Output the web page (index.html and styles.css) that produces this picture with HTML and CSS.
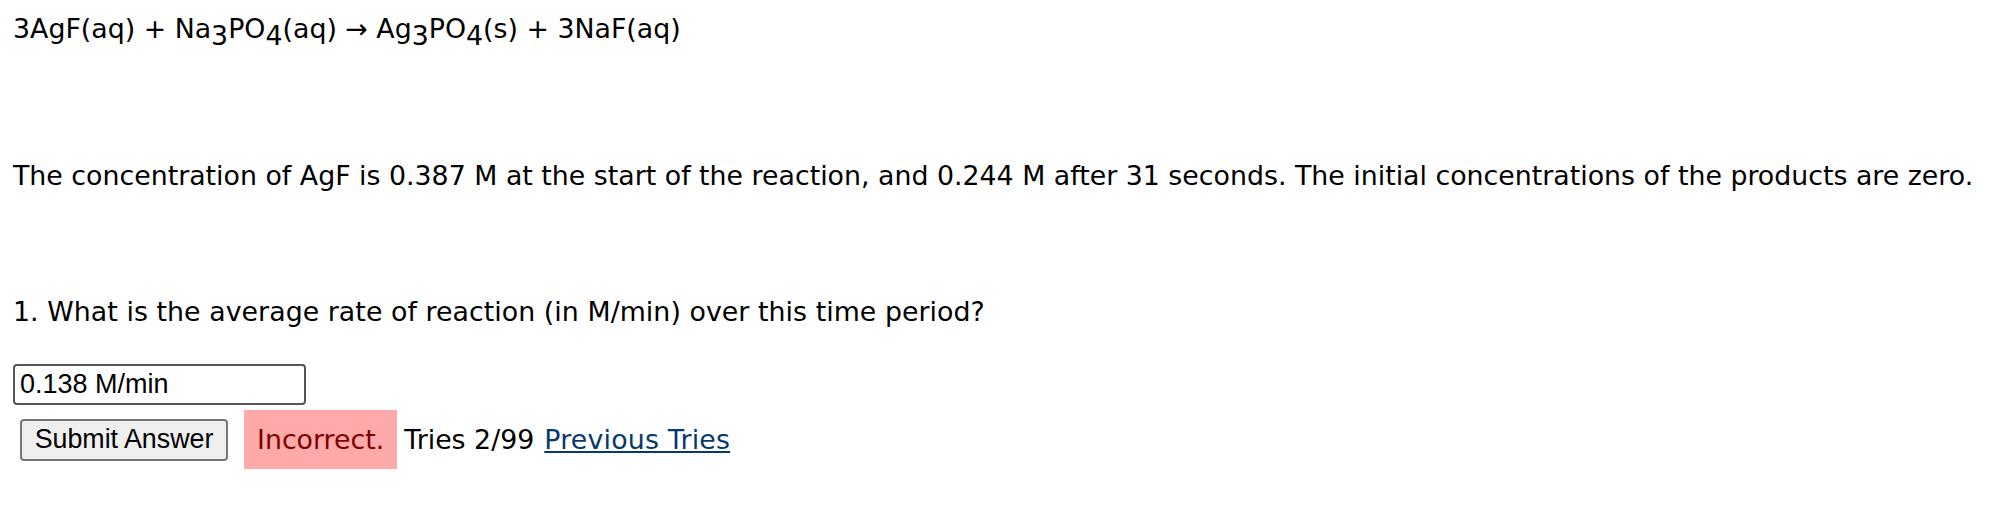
FILE: index.html
```html
<!DOCTYPE html>
<html>
<head>
<meta charset="utf-8">
<link rel="stylesheet" href="styles.css">
</head>
<body>
<div class="page">
  <p class="equation">3AgF(aq) + Na<sub>3</sub>PO<sub>4</sub>(aq) → Ag<sub>3</sub>PO<sub>4</sub>(s) + 3NaF(aq)</p>
  <p class="statement">The concentration of AgF is 0.387 M at the start of the reaction, and 0.244 M after 31 seconds. The initial concentrations of the products are zero.</p>
  <p class="question">1. What is the average rate of reaction (in M/min) over this time period?</p>
  <div class="answer-row">
    <input class="answer" type="text" value="0.138 M/min">
  </div>
  <div class="submit-row">
    <button class="submit">Submit Answer</button>
    <span class="status">Incorrect.</span>
    <span class="tries">Tries 2/99</span>
    <a class="prev" href="#">Previous Tries</a>
  </div>
</div>
</body>
</html>
```
FILE: styles.css
```css
html, body {
  margin: 0;
  padding: 0;
  background: #fff;
}
.page {
  padding: 0 13px;
  font-family: "DejaVu Sans", Verdana, sans-serif;
  font-size: 26.8px;
  color: #000;
}
p {
  margin: 0;
}
.equation {
  padding-top: 13px;
  line-height: 32px;
}
.equation sub {
  font-size: 1em;
  vertical-align: -7px;
  line-height: 0;
}
.statement {
  margin-top: 115px;
  line-height: 32px;
}
.question {
  margin-top: 104px;
  line-height: 32px;
  letter-spacing: 0.05px;
}
.answer-row {
  margin-top: 36px;
  line-height: 0;
}
.answer {
  box-sizing: border-box;
  width: 293px;
  height: 41px;
  margin: 0;
  border: 2px solid #555;
  border-radius: 4px;
  padding: 0 5px;
  font-family: "Liberation Sans", Arial, sans-serif;
  font-size: 27px;
  color: #000;
  outline: none;
}
.submit-row {
  display: flex;
  align-items: center;
  margin-top: 5px;
  margin-left: 7px;
}
.submit {
  box-sizing: border-box;
  width: 208px;
  height: 42px;
  background: #efefef;
  border: 2px solid #767676;
  border-radius: 4px;
  font-family: "Liberation Sans", Arial, sans-serif;
  font-size: 26.8px;
  color: #000;
  padding: 0;
}
.status {
  margin-left: 16px;
  background: #ffaaaa;
  color: #800000;
  padding: 14px 13px;
  line-height: 31px;
}
.tries {
  margin-left: 7px;
}
.prev {
  margin-left: 10px;
  color: #07386f;
  text-decoration: underline;
  letter-spacing: 0.2px;
}
```
